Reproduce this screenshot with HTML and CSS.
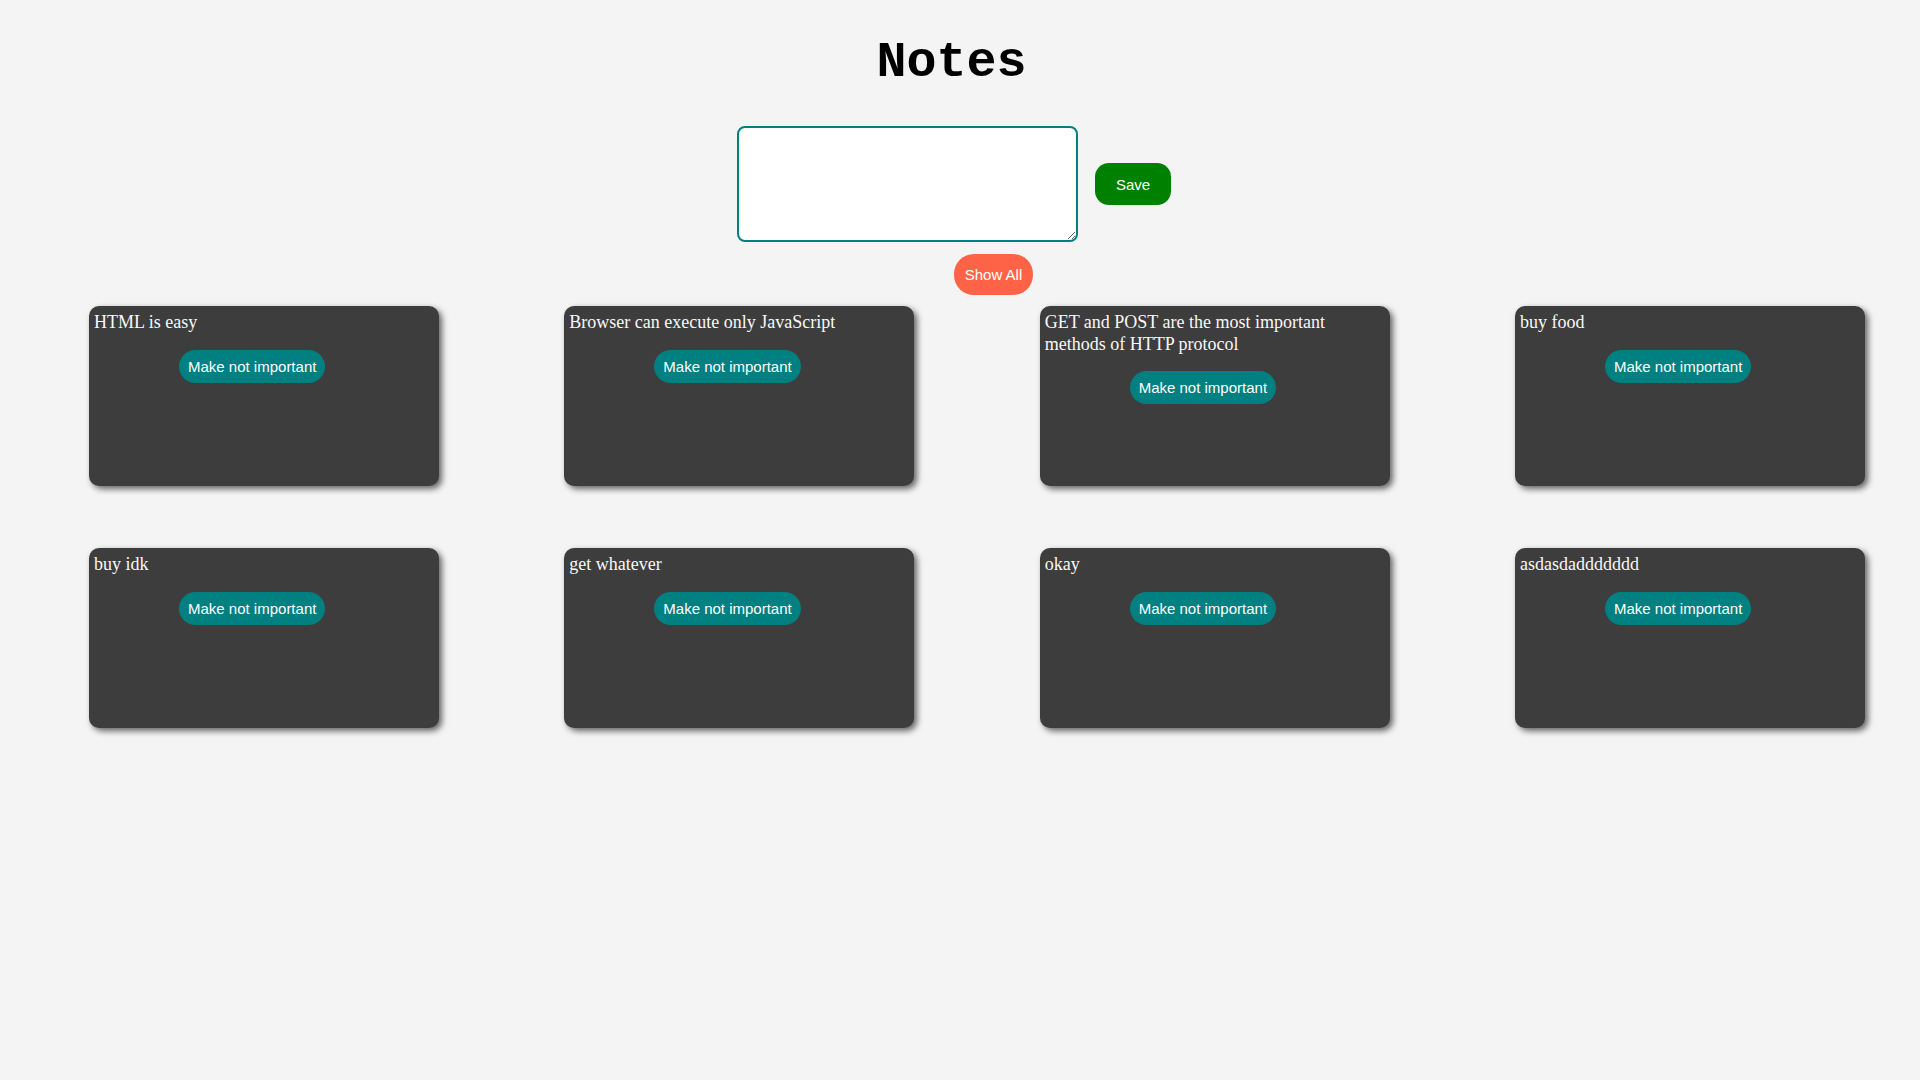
FILE: index.html
```html
<!DOCTYPE html>
<html lang="en">
<head>
<meta charset="utf-8">
<title>Notes</title>
<link rel="stylesheet" href="styles.css">
</head>
<body>
<div class="page">
  <h1 class="title">Notes</h1>
  <form class="composer">
    <textarea class="note-input"></textarea>
    <button type="button" class="btn btn-save">Save</button>
  </form>
  <div class="filter-row">
    <button type="button" class="btn btn-show">Show All</button>
  </div>
  <div class="notes">
    <div class="note"><p class="note-text">HTML is easy</p><button type="button" class="btn btn-toggle">Make not important</button></div>
    <div class="note"><p class="note-text">Browser can execute only JavaScript</p><button type="button" class="btn btn-toggle">Make not important</button></div>
    <div class="note"><p class="note-text">GET and POST are the most important methods of HTTP protocol</p><button type="button" class="btn btn-toggle">Make not important</button></div>
    <div class="note"><p class="note-text">buy food</p><button type="button" class="btn btn-toggle">Make not important</button></div>
    <div class="note"><p class="note-text">buy idk</p><button type="button" class="btn btn-toggle">Make not important</button></div>
    <div class="note"><p class="note-text">get whatever</p><button type="button" class="btn btn-toggle">Make not important</button></div>
    <div class="note"><p class="note-text">okay</p><button type="button" class="btn btn-toggle">Make not important</button></div>
    <div class="note"><p class="note-text">asdasdaddddddd</p><button type="button" class="btn btn-toggle">Make not important</button></div>
  </div>
</div>
</body>
</html>
```
FILE: styles.css
```css
html, body {
  margin: 0;
  padding: 0;
  background: #f4f4f4;
}

.page {
  width: 1903px;
  min-height: 1080px;
}

.title {
  margin: 34px 0 0;
  font-family: "Liberation Mono", "Courier New", monospace;
  font-weight: bold;
  font-size: 50px;
  line-height: 57px;
  text-align: center;
  color: #000;
}

.composer {
  display: flex;
  justify-content: center;
  align-items: center;
  gap: 17px;
  margin: 35px 0 0;
  padding-left: 5px;
}

.note-input {
  box-sizing: border-box;
  width: 341px;
  height: 116px;
  border: 2px solid #008080;
  border-radius: 8px;
  background: #fff;
  outline: none;
  padding: 2px;
  font-family: "Liberation Sans", Arial, sans-serif;
  font-size: 15px;
  resize: both;
}

.btn {
  border: none;
  color: #fff;
  font-family: "Liberation Sans", Arial, sans-serif;
  font-size: 15px;
  cursor: pointer;
  box-sizing: border-box;
}

.btn-save {
  background: #008000;
  width: 76px;
  height: 42px;
  border-radius: 14px;
  padding: 0;
}

.filter-row {
  display: flex;
  margin-top: 12px;
  padding-left: 954px;
}

.btn-show {
  background: #ff6347;
  width: 79px;
  height: 41px;
  border-radius: 20px;
  padding: 0;
}

.notes {
  display: grid;
  grid-template-columns: repeat(4, 350px);
  column-gap: 125.33px;
  row-gap: 62px;
  margin-top: 11px;
  padding-left: 89px;
}

.note {
  box-sizing: border-box;
  height: 180px;
  background: #3d3d3d;
  border-radius: 10px;
  padding: 6px 5px 5px;
  box-shadow: 3px 3px 6px rgba(0, 0, 0, 0.6);
}

.note-text {
  margin: 0;
  font-family: "Liberation Serif", "Times New Roman", serif;
  font-size: 18px;
  line-height: 21.7px;
  color: #f8f8f8;
}

.btn-toggle {
  display: block;
  margin: 16px 0 0 85px;
  background: #008080;
  height: 33px;
  padding: 0 9px;
  border-radius: 17px;
}
```
